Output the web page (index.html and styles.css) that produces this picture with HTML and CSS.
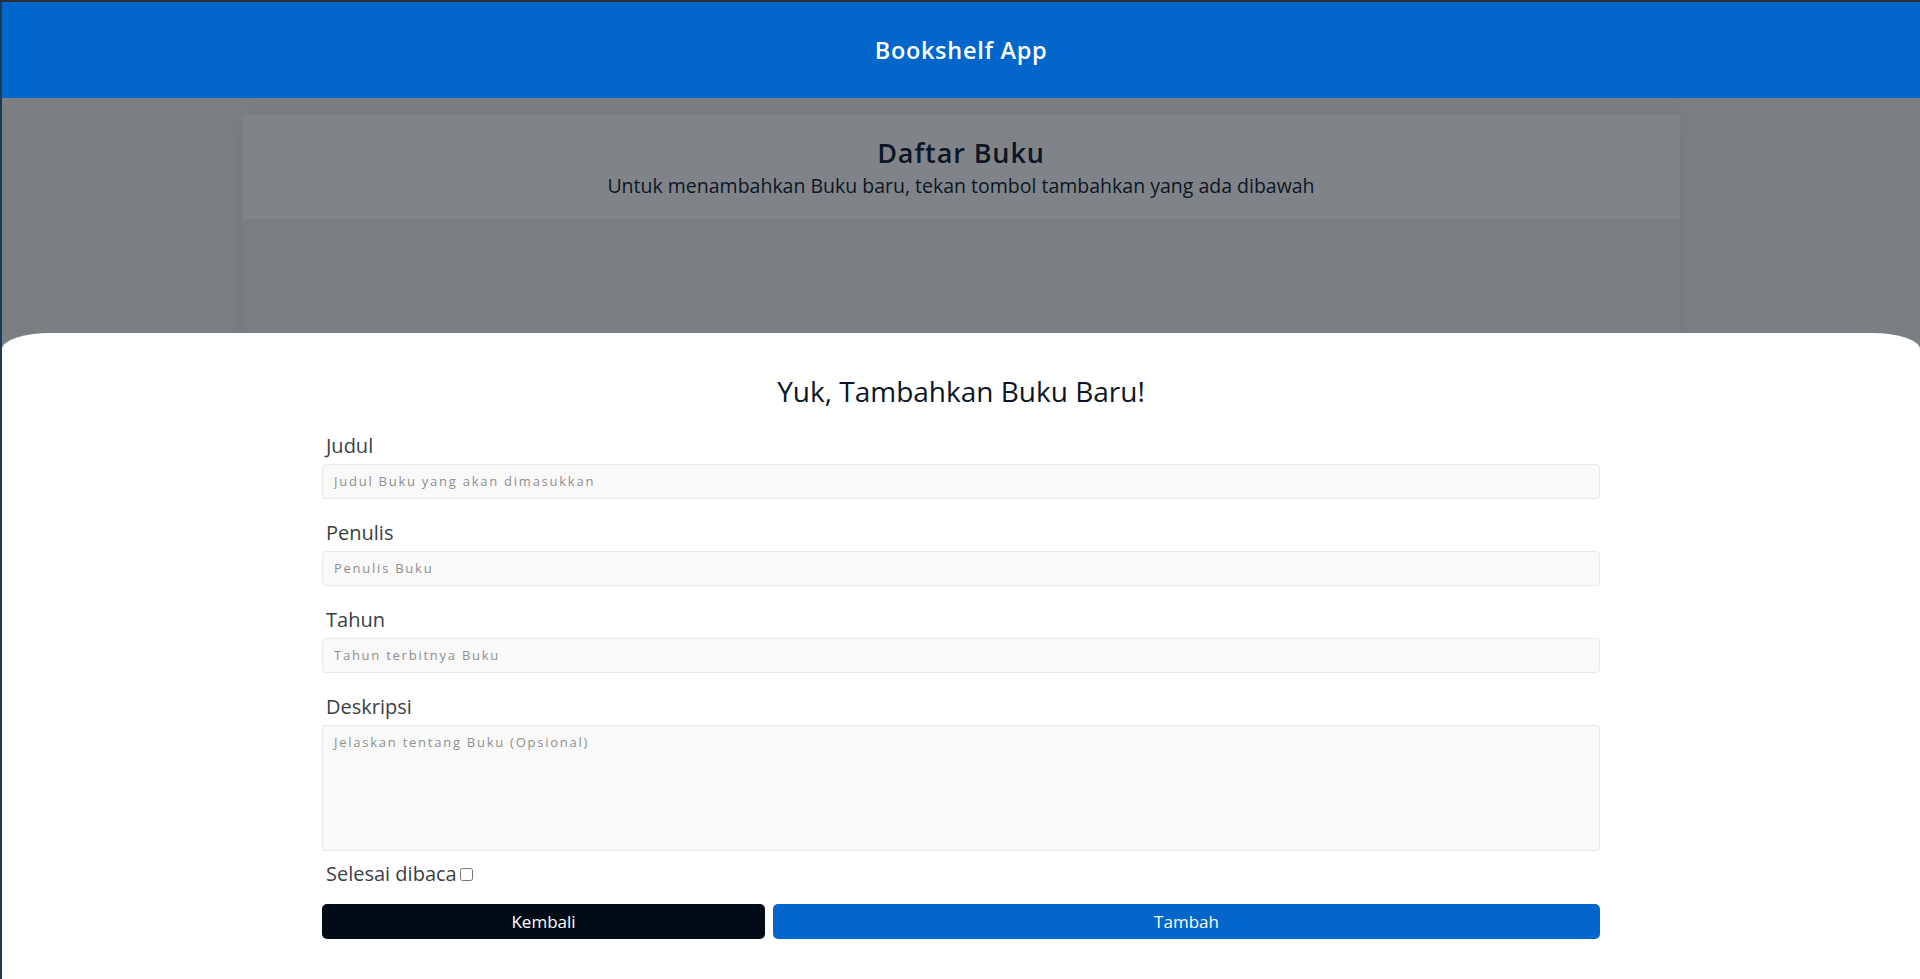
FILE: index.html
```html
<!DOCTYPE html>
<html lang="id">
<head>
<meta charset="utf-8">
<title>Bookshelf App</title>
<link rel="stylesheet" href="styles.css">
</head>
<body>
<div class="window">
  <header class="topbar">
    <h1 class="brand">Bookshelf App</h1>
  </header>
  <main class="page">
    <section class="shelf">
      <div class="shelf-head">
        <h2 class="shelf-title">Daftar Buku</h2>
        <p class="shelf-sub">Untuk menambahkan Buku baru, tekan tombol tambahkan yang ada dibawah</p>
      </div>
      <div class="shelf-list"></div>
    </section>
  </main>
  <div class="sheet">
    <h3 class="sheet-title">Yuk, Tambahkan Buku Baru!</h3>
    <form class="book-form">
      <div class="field">
        <label class="field-label" for="judul">Judul</label>
        <input class="field-input" id="judul" type="text" placeholder="Judul Buku yang akan dimasukkan">
      </div>
      <div class="field">
        <label class="field-label" for="penulis">Penulis</label>
        <input class="field-input" id="penulis" type="text" placeholder="Penulis Buku">
      </div>
      <div class="field">
        <label class="field-label" for="tahun">Tahun</label>
        <input class="field-input" id="tahun" type="text" placeholder="Tahun terbitnya Buku">
      </div>
      <div class="field field-last">
        <label class="field-label" for="deskripsi">Deskripsi</label>
        <textarea class="field-input field-area" id="deskripsi" placeholder="Jelaskan tentang Buku (Opsional)"></textarea>
      </div>
      <div class="check-row">
        <label class="field-label" for="selesai">Selesai dibaca</label><input class="check" id="selesai" type="checkbox">
      </div>
      <div class="actions">
        <button type="button" class="btn btn-back">Kembali</button>
        <button type="button" class="btn btn-add">Tambah</button>
      </div>
    </form>
  </div>
</div>
</body>
</html>
```
FILE: styles.css
```css
* { box-sizing: border-box; }

html, body {
  margin: 0;
  height: 100%;
}

body {
  font-family: "Open Sans", "Liberation Sans", sans-serif;
  background: #7b7f84;
  overflow: hidden;
}

.window {
  height: 100%;
  border-top: 2px solid #2c2f33;
  border-left: 2px solid #1b3a56;
  background: #7b7f84;
}

.topbar {
  height: 96px;
  background: #0366ca;
  display: flex;
  align-items: center;
  justify-content: center;
}

.brand {
  margin: 0;
  color: #ffffff;
  font-size: 23.5px;
  font-weight: 600;
  letter-spacing: 0.7px;
  line-height: 1;
  padding-top: 1px;
}

.page {
  padding-top: 16px;
}

.shelf {
  width: 1438px;
  margin: 0 auto;
  height: 400px;
  background: #7a7e83;
  border-radius: 5px;
  box-shadow: 0 0 18px rgba(0, 0, 0, 0.06);
}

.shelf-head {
  height: 105px;
  background: #808488;
  border-radius: 5px 5px 0 0;
  text-align: center;
  padding-top: 22px;
}

.shelf-title {
  margin: 0;
  font-size: 27px;
  font-weight: 600;
  letter-spacing: 0.9px;
  line-height: 34px;
  color: #0c1625;
}

.shelf-sub {
  margin: 0;
  font-size: 19.5px;
  line-height: 32px;
  color: #0c1625;
}

.sheet {
  position: fixed;
  top: 333px;
  left: 2px;
  right: 0;
  bottom: 0;
  background: #ffffff;
  border-radius: 48px 48px 0 0 / 16px 16px 0 0;
  padding-top: 38px;
}

.sheet-title {
  margin: 0;
  text-align: center;
  font-size: 28px;
  font-weight: 400;
  line-height: 40px;
  color: #0b1727;
}

.book-form {
  width: 1278px;
  margin: 21px auto 0;
}

.field {
  display: flex;
  flex-direction: column;
  gap: 4px;
  margin-bottom: 20px;
}

.field-last {
  margin-bottom: 9px;
}

.field-label {
  font-size: 20px;
  line-height: 28px;
  color: #3a3f46;
  padding-left: 4px;
}

.field-input {
  height: 35px;
  width: 100%;
  background: #f9f9f9;
  border: 1px solid #e9e9e9;
  border-radius: 4px;
  padding: 0 11px 1px;
  font-family: inherit;
  font-size: 13px;
  letter-spacing: 1.75px;
  color: #333;
  outline: none;
}

.field-input::placeholder {
  color: #8f8f8f;
}

.field-area {
  height: 126px;
  padding-top: 7px;
  resize: none;
  display: block;
}

.check-row {
  display: flex;
  align-items: center;
  height: 28px;
}

.check {
  width: 13px;
  height: 13px;
  margin: 0 0 0 3px;
}

.actions {
  margin-top: 16px;
  display: grid;
  grid-template-columns: 443fr 827fr;
  gap: 8px;
}

.btn {
  height: 35px;
  border: 0;
  border-radius: 5px;
  color: #ffffff;
  font-family: inherit;
  font-size: 17px;
  font-weight: 500;
}

.btn-back {
  background: #020c17;
}

.btn-add {
  background: #0366ca;
}
```
